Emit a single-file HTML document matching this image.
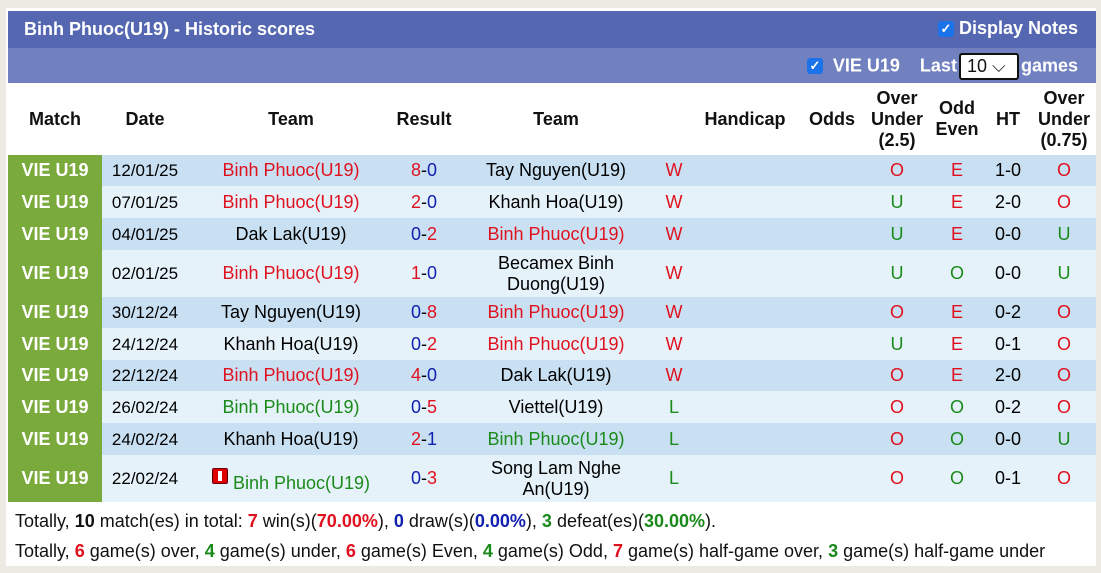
<!DOCTYPE html>
<html><head><meta charset="utf-8"><style>
body{margin:0;background:#ebebe3;font-family:"Liberation Sans",Arial,sans-serif;}
#w{position:absolute;left:6px;top:8px;width:1090px;height:558px;background:#fff;}
.h1{position:absolute;left:2px;top:3px;width:1088px;height:37px;background:#5467b0;color:#fff;font-weight:bold;font-size:18px;}
.h2{position:absolute;left:2px;top:40px;width:1088px;height:35px;background:#7181c0;color:#fff;font-weight:bold;font-size:18px;}
.cb{display:inline-block;width:16px;height:16px;background:#1a73e8;border-radius:3px;color:#fff;font-size:13px;line-height:16px;text-align:center;vertical-align:1px;}
table{position:absolute;left:2px;top:75px;border-collapse:collapse;width:1088px;font-size:18px;table-layout:fixed;}
td,th{text-align:center;padding:0;}
th{font-weight:bold;color:#111;height:72px;font-size:18px;line-height:21px;}
td.m{background:#7aaa3c;color:#fff;font-weight:bold;font-size:18px;}
td{line-height:21px;}
td.d{font-size:17px;}
tr.a td{background:#c9e0f3;} tr.b td{background:#e6f2fa;}
tr.a td.m,tr.b td.m{background:#7aaa3c;}
.r{color:#e0111e}.g{color:#1a8a1a}.bl{color:#1020b0}
.s{position:absolute;left:9px;font-size:18px;color:#111;}
</style></head><body><div id="w">
<div class="h1"><span style="position:absolute;left:16px;top:8px">Binh Phuoc(U19) - Historic scores</span><span style="position:absolute;right:18px;top:7px"><span class="cb">✓</span> Display Notes</span></div>
<div class="h2"><span style="position:absolute;right:18px;top:5px"><span class="cb">✓</span>&nbsp; VIE U19 &nbsp;&nbsp; Last<span style="display:inline-block;border:2px solid #111;border-radius:3px;background:#fff;color:#111;font-weight:normal;width:60px;height:27px;line-height:23px;text-align:left;padding-left:6px;box-sizing:border-box;vertical-align:middle;margin:0 2px;">10 ⌵</span>games</span></div>
<table>
<colgroup><col width="94"><col width="86"><col width="206"><col width="60"><col width="204"><col width="32"><col width="110"><col width="64"><col width="66"><col width="54"><col width="48"><col width="64"></colgroup>
<tr><th>Match</th><th>Date</th><th>Team</th><th>Result</th><th>Team</th><th></th><th>Handicap</th><th>Odds</th><th>Over<br>Under<br>(2.5)</th><th>Odd<br>Even</th><th>HT</th><th>Over<br>Under<br>(0.75)</th></tr>
<tr class="a" style="height:31px"><td class="m">VIE U19</td><td class="d">12/01/25</td><td class="r">Binh Phuoc(U19)</td><td><span class="r">8</span>-<span class="bl">0</span></td><td>Tay Nguyen(U19)</td><td class="r">W</td><td></td><td></td><td class="r">O</td><td class="r">E</td><td>1-0</td><td class="r">O</td></tr>
<tr class="b" style="height:32px"><td class="m">VIE U19</td><td class="d">07/01/25</td><td class="r">Binh Phuoc(U19)</td><td><span class="r">2</span>-<span class="bl">0</span></td><td>Khanh Hoa(U19)</td><td class="r">W</td><td></td><td></td><td class="g">U</td><td class="r">E</td><td>2-0</td><td class="r">O</td></tr>
<tr class="a" style="height:32px"><td class="m">VIE U19</td><td class="d">04/01/25</td><td>Dak Lak(U19)</td><td><span class="bl">0</span>-<span class="r">2</span></td><td class="r">Binh Phuoc(U19)</td><td class="r">W</td><td></td><td></td><td class="g">U</td><td class="r">E</td><td>0-0</td><td class="g">U</td></tr>
<tr class="b" style="height:47px"><td class="m">VIE U19</td><td class="d">02/01/25</td><td class="r">Binh Phuoc(U19)</td><td><span class="r">1</span>-<span class="bl">0</span></td><td>Becamex Binh<br>Duong(U19)</td><td class="r">W</td><td></td><td></td><td class="g">U</td><td class="g">O</td><td>0-0</td><td class="g">U</td></tr>
<tr class="a" style="height:31px"><td class="m">VIE U19</td><td class="d">30/12/24</td><td>Tay Nguyen(U19)</td><td><span class="bl">0</span>-<span class="r">8</span></td><td class="r">Binh Phuoc(U19)</td><td class="r">W</td><td></td><td></td><td class="r">O</td><td class="r">E</td><td>0-2</td><td class="r">O</td></tr>
<tr class="b" style="height:32px"><td class="m">VIE U19</td><td class="d">24/12/24</td><td>Khanh Hoa(U19)</td><td><span class="bl">0</span>-<span class="r">2</span></td><td class="r">Binh Phuoc(U19)</td><td class="r">W</td><td></td><td></td><td class="g">U</td><td class="r">E</td><td>0-1</td><td class="r">O</td></tr>
<tr class="a" style="height:31px"><td class="m">VIE U19</td><td class="d">22/12/24</td><td class="r">Binh Phuoc(U19)</td><td><span class="r">4</span>-<span class="bl">0</span></td><td>Dak Lak(U19)</td><td class="r">W</td><td></td><td></td><td class="r">O</td><td class="r">E</td><td>2-0</td><td class="r">O</td></tr>
<tr class="b" style="height:32px"><td class="m">VIE U19</td><td class="d">26/02/24</td><td class="g">Binh Phuoc(U19)</td><td><span class="bl">0</span>-<span class="r">5</span></td><td>Viettel(U19)</td><td class="g">L</td><td></td><td></td><td class="r">O</td><td class="g">O</td><td>0-2</td><td class="r">O</td></tr>
<tr class="a" style="height:32px"><td class="m">VIE U19</td><td class="d">24/02/24</td><td>Khanh Hoa(U19)</td><td><span class="r">2</span>-<span class="bl">1</span></td><td class="g">Binh Phuoc(U19)</td><td class="g">L</td><td></td><td></td><td class="r">O</td><td class="g">O</td><td>0-0</td><td class="g">U</td></tr>
<tr class="b" style="height:47px"><td class="m">VIE U19</td><td class="d">22/02/24</td><td class="g"><span style="display:inline-block;width:14px;height:14px;background:#d00;border:1px solid #600;border-radius:2px;vertical-align:1px;position:relative"><span style="position:absolute;left:5px;top:2px;width:4px;height:10px;background:#fff"></span></span> <span style="position:relative;top:4px">Binh Phuoc(U19)</span></td><td><span class="bl">0</span>-<span class="r">3</span></td><td>Song Lam Nghe<br>An(U19)</td><td class="g">L</td><td></td><td></td><td class="r">O</td><td class="g">O</td><td>0-1</td><td class="r">O</td></tr>
</table>
<div class="s" style="top:503px">Totally, <b>10</b> match(es) in total: <b class="r">7</b> win(s)(<b class="r">70.00%</b>), <b class="bl">0</b> draw(s)(<b class="bl">0.00%</b>), <b class="g">3</b> defeat(es)(<b class="g">30.00%</b>).</div>
<div class="s" style="top:533px">Totally, <b class="r">6</b> game(s) over, <b class="g">4</b> game(s) under, <b class="r">6</b> game(s) Even, <b class="g">4</b> game(s) Odd, <b class="r">7</b> game(s) half-game over, <b class="g">3</b> game(s) half-game under</div>
</div></body></html>
